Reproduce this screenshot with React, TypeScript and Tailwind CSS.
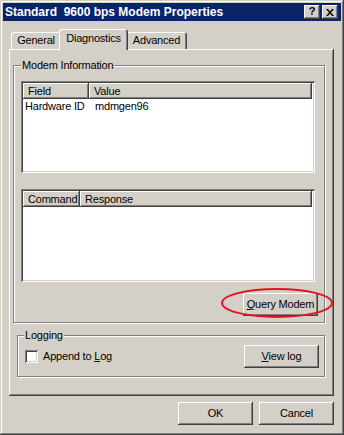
import React from 'react';

const raised =
  'shadow-[inset_-1px_-1px_#404040,inset_1px_1px_#ffffff,inset_-2px_-2px_#808080,inset_2px_2px_#d4d0c8]';
const sunken =
  'shadow-[inset_1px_1px_#808080,inset_-1px_-1px_#ffffff,inset_2px_2px_#404040,inset_-2px_-2px_#d4d0c8]';
const etched = 'border border-[#808080] shadow-[inset_1px_1px_#ffffff,1px_1px_#ffffff]';

const Button: React.FC<{ className?: string; children: React.ReactNode }> = ({ className = '', children }) => (
  <div className={`flex items-center justify-center bg-[#d4d0c8] ${raised} ${className}`}>{children}</div>
);

const ListView: React.FC<{ cols: { label: string; w?: string }[]; rows: string[][]; className?: string }> = ({
  cols,
  rows,
  className = '',
}) => (
  <div className={`bg-white p-[2px] ${sunken} ${className}`}>
    <div className="flex h-[16px]">
      {cols.map((c, i) => (
        <div
          key={c.label}
          className={`flex items-center bg-[#d4d0c8] pl-[5px] shadow-[inset_-1px_-1px_#404040,inset_1px_1px_#ffffff,inset_-2px_-2px_#808080] ${
            c.w ?? 'flex-1'
          } ${i === cols.length - 1 ? 'mr-[1px]' : ''}`}
        >
          {c.label}
        </div>
      ))}
    </div>
    {rows.map((r) => (
      <div key={r[0]} className="flex h-[15px] items-center">
        <div className="w-[69px] pl-[2px]">{r[0]}</div>
        <div className="pl-[3px]">{r[1]}</div>
      </div>
    ))}
  </div>
);

const tabBase =
  'flex items-center justify-center bg-[#d4d0c8] rounded-t-[3px] shadow-[inset_1px_1px_#ffffff,inset_-1px_0_#404040,inset_-2px_0_#808080]';

export default function App() {
  return (
    <div className="relative flex h-[435px] w-[344px] flex-col bg-[#d4d0c8] p-[3px] font-['Liberation_Sans',Arial,sans-serif] text-[11px] tracking-[-0.2px] text-black shadow-[inset_-1px_-1px_#404040,inset_1px_1px_#d4d0c8,inset_-2px_-2px_#808080,inset_2px_2px_#ffffff]">
      {/* title bar */}
      <div className="flex h-[18px] items-center justify-between bg-[#0a246a] pl-[2px] pr-[3px]">
        <span className="text-[12px] font-bold tracking-normal whitespace-pre text-white">Standard  9600 bps Modem Properties</span>
        <div className="flex gap-[2px]">
          <Button className="h-[14px] w-[16px] pb-[1px] text-[11px] font-bold">?</Button>
          <Button className="h-[14px] w-[16px]">
            <svg width="8" height="7" viewBox="0 0 8 7">
              <path d="M0 0h2l2 2.5L6 0h2L5 3.5 8 7H6L4 4.5 2 7H0l3-3.5z" fill="#000" />
            </svg>
          </Button>
        </div>
      </div>

      <div className="flex flex-col pl-[6px] pr-[7px]">
        {/* tabs */}
        <div className="mt-[8px] flex h-[20px] items-end pl-[2px]">
          <div className={`${tabBase} h-[17px] w-[50px]`}>General</div>
          <div className={`${tabBase} relative z-10 -mx-[2px] mb-[-1px] h-[21px] w-[69px] pb-[3px]`}>Diagnostics</div>
          <div className={`${tabBase} h-[17px] w-[61px]`}>Advanced</div>
        </div>

        {/* panel */}
        <div className="flex h-[347px] flex-col bg-[#d4d0c8] pl-[4px] pr-[9px] shadow-[inset_-1px_-1px_#404040,inset_1px_1px_#ffffff,inset_-2px_-2px_#808080]">
          <div className={`relative mt-[16px] flex h-[258px] flex-col pl-[7px] ${etched}`}>
            <span className="absolute left-[7px] top-[-8px] bg-[#d4d0c8] px-[1px] leading-[14px]">Modem Information</span>
            <ListView
              className="mt-[15px] h-[92px] w-[294px]"
              cols={[{ label: 'Field', w: 'w-[66px]' }, { label: 'Value' }]}
              rows={[['Hardware ID', 'mdmgen96']]}
            />
            <ListView
              className="mt-[16px] h-[93px] w-[294px]"
              cols={[{ label: 'Command', w: 'w-[57px]' }, { label: 'Response' }]}
              rows={[]}
            />
            <Button className="mt-[11px] mr-[6px] h-[23px] w-[75px] self-end shadow-[inset_-1px_-1px_#000000,inset_1px_1px_#ffffff,inset_-2px_-2px_#404040,inset_2px_2px_#d4d0c8]">
              <span>
                <span className="underline">Q</span>uery Modem
              </span>
            </Button>
          </div>

          <div className={`relative ml-[4px] mt-[12px] flex h-[42px] items-center justify-between pl-[7px] pr-[5px] ${etched}`}>
            <span className="absolute left-[6px] top-[-8px] bg-[#d4d0c8] px-[1px] leading-[14px]">Logging</span>
            <div className="flex items-center gap-[5px]">
              <div className={`h-[13px] w-[13px] bg-white ${sunken}`} />
              <span>
                Append to <span className="underline">L</span>og
              </span>
            </div>
            <Button className="h-[23px] w-[75px]">
              <span>
                <span className="underline">V</span>iew log
              </span>
            </Button>
          </div>
        </div>

        {/* dialog buttons */}
        <div className="mt-[6px] flex justify-end gap-[6px]">
          <Button className="h-[23px] w-[75px]">OK</Button>
          <Button className="h-[23px] w-[75px]">Cancel</Button>
        </div>
      </div>

      {/* red annotation */}
      <svg className="pointer-events-none absolute left-[220px] top-[287px]" width="114" height="32" viewBox="0 0 114 32">
        <ellipse cx="57" cy="16" rx="55" ry="14" fill="none" stroke="#e3141c" strokeWidth="2" />
      </svg>
    </div>
  );
}
